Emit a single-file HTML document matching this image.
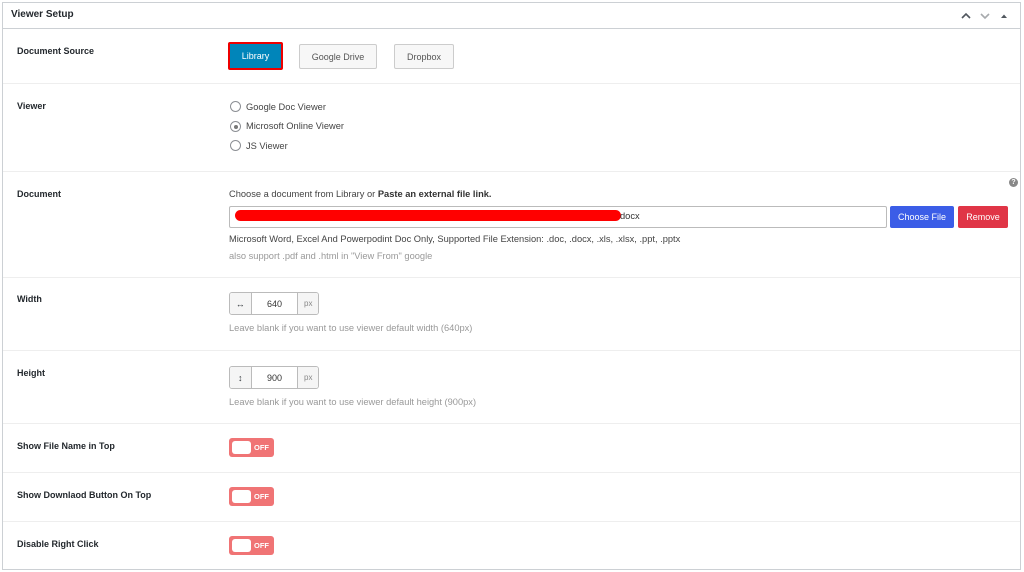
<!DOCTYPE html>
<html><head><style>
*{box-sizing:border-box;margin:0;padding:0}
body{width:1024px;height:572px;background:#fff;font-family:"Liberation Sans",sans-serif;position:relative;overflow:hidden;color:#32373c}
.box{position:absolute;left:2px;top:2px;width:1019px;height:568px;border:1px solid #ccd0d4}
.a{position:absolute}
.hr{position:absolute;left:3px;width:1017px;height:1px;background:#eee}
.lbl{position:absolute;left:17px;font-size:9px;font-weight:bold;color:#23282d}
.t{position:absolute;font-size:9.3px;color:#444;white-space:nowrap}
.g{color:#999}
.btn{position:absolute;font-size:9px;display:flex;align-items:center;justify-content:center;border-radius:2px}
.gb{background:#f7f7f7;border:1px solid #ccc;color:#555}
.radio{position:absolute;left:230px;width:11px;height:11px;border:1px solid #8c8f94;border-radius:50%;background:#fff}
.ig{position:absolute;left:229px;width:90px;height:23px;border:1px solid #bbb;border-radius:3px;display:flex;font-size:9px;overflow:hidden}
.ig div{display:flex;align-items:center;justify-content:center}
.tg{position:absolute;left:229px;width:45px;height:19px;background:#f07475;border-radius:3px}
.tg i{position:absolute;left:3px;top:3px;width:19px;height:13px;background:#fff;border-radius:3px}
.tg b{position:absolute;left:25px;top:5px;font-size:7.5px;color:#fff}
</style></head><body>
<div class="box"></div>
<div class="hr" style="top:28px;background:#ccd0d4"></div>
<div class="a" style="left:11px;top:9px;font-size:10px;font-weight:bold;color:#23282d">Viewer Setup</div>
<svg class="a" style="left:961px;top:10px" width="50" height="12"><path d="M1 8 L5 4 L9 8" stroke="#50575e" stroke-width="1.6" fill="none"/><path d="M20 4 L24 8 L28 4" stroke="#a7aaad" stroke-width="1.6" fill="none"/><path d="M40 8 L43 4.5 L46 8Z" fill="#50575e"/></svg>

<div class="lbl" style="top:46px">Document Source</div>
<div class="btn" style="left:228px;top:42px;width:55px;height:28px;background:#0085ba;color:#fff;border:2px solid #e00">Library</div>
<div class="btn gb" style="left:299px;top:44px;width:78px;height:25px">Google Drive</div>
<div class="btn gb" style="left:394px;top:44px;width:60px;height:25px">Dropbox</div>
<div class="hr" style="top:83px"></div>

<div class="lbl" style="top:101px">Viewer</div>
<div class="radio" style="top:101px"></div><div class="t" style="left:246px;top:102px">Google Doc Viewer</div>
<div class="radio" style="top:121px"><div style="position:absolute;left:2.5px;top:2.5px;width:4px;height:4px;border-radius:50%;background:#777"></div></div><div class="t" style="left:246px;top:121px">Microsoft Online Viewer</div>
<div class="radio" style="top:140px"></div><div class="t" style="left:246px;top:141px">JS Viewer</div>
<div class="hr" style="top:171px"></div>

<div class="lbl" style="top:189px">Document</div>
<div class="a" style="left:1009px;top:178px;width:9px;height:9px;border-radius:50%;background:#888;color:#fff;font-size:7px;text-align:center;line-height:9px;font-weight:bold">?</div>
<div class="t" style="left:229px;top:189px">Choose a document from Library or <b style="color:#333">Paste an external file link.</b></div>
<div class="a" style="left:229px;top:206px;width:658px;height:22px;border:1px solid #bbb;border-radius:2px"></div>
<div class="a" style="left:235px;top:210px;width:386px;height:11px;background:#f00;border-radius:6px"></div>
<div class="t" style="left:620px;top:211px;color:#333">docx</div>
<div class="btn" style="left:890px;top:206px;width:64px;height:22px;background:#3b5de7;color:#fff">Choose File</div>
<div class="btn" style="left:958px;top:206px;width:50px;height:22px;background:#e03546;color:#fff">Remove</div>
<div class="t" style="left:229px;top:234px">Microsoft Word, Excel And Powerpodint Doc Only, Supported File Extension: .doc, .docx, .xls, .xlsx, .ppt, .pptx</div>
<div class="t g" style="left:229px;top:251px">also support .pdf and .html in "View From" google</div>
<div class="hr" style="top:277px"></div>

<div class="lbl" style="top:294px">Width</div>
<div class="ig" style="top:292px"><div style="width:22px;background:#f5f5f5;border-right:1px solid #bbb">↔</div><div style="width:47px;color:#333">640</div><div style="width:21px;background:#f5f5f5;border-left:1px solid #bbb;color:#888;font-size:8px">px</div></div>
<div class="t g" style="left:229px;top:323px">Leave blank if you want to use viewer default width (640px)</div>
<div class="hr" style="top:350px"></div>

<div class="lbl" style="top:368px">Height</div>
<div class="ig" style="top:366px"><div style="width:22px;background:#f5f5f5;border-right:1px solid #bbb">↕</div><div style="width:47px;color:#333">900</div><div style="width:21px;background:#f5f5f5;border-left:1px solid #bbb;color:#888;font-size:8px">px</div></div>
<div class="t g" style="left:229px;top:397px">Leave blank if you want to use viewer default height (900px)</div>
<div class="hr" style="top:423px"></div>

<div class="lbl" style="top:441px">Show File Name in Top</div>
<div class="tg" style="top:438px"><i></i><b>OFF</b></div>
<div class="hr" style="top:472px"></div>
<div class="lbl" style="top:490px">Show Downlaod Button On Top</div>
<div class="tg" style="top:487px"><i></i><b>OFF</b></div>
<div class="hr" style="top:521px"></div>
<div class="lbl" style="top:539px">Disable Right Click</div>
<div class="tg" style="top:536px"><i></i><b>OFF</b></div>
</body></html>
